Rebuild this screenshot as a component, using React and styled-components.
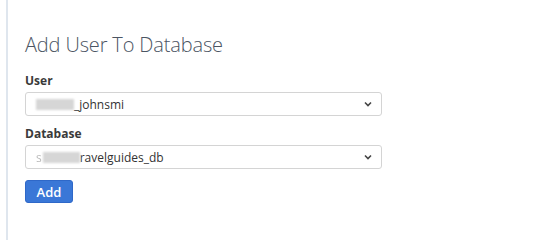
import React from 'react';
import styled, { createGlobalStyle } from 'styled-components';

const GlobalStyle = createGlobalStyle`
body {
  margin: 0;
  background: #ffffff;
  font-family: "Open Sans", "Liberation Sans", Arial, sans-serif;
}
`;

const Page = styled.div`
width: 550px;
height: 240px;
padding-left: 6px;
box-sizing: border-box;
overflow: hidden;
`;

// panel with the faint rule down its left edge
const Panel = styled.section`
height: 100%;
border-left: 2px solid #dfe6ee;
padding: 33px 0 0 17px;
box-sizing: border-box;
display: flex;
flex-direction: column;
`;

const Heading = styled.h2`
margin: 0 0 16px;
font-size: 20px;
line-height: 24px;
font-weight: 300;
color: #4b5563;
letter-spacing: -0.15px;
`;

const Field = styled.div`
display: flex;
flex-direction: column;
margin-bottom: ${({ last }) => (last ? '11px' : '10px')};
`;

const Label = styled.label`
font-size: 12px;
line-height: 16px;
font-weight: 700;
color: #3a3a3a;
margin-bottom: 3px;
`;

const SelectBox = styled.div`
width: 357px;
height: 24px;
box-sizing: border-box;
border: 1px solid #d4d4d4;
border-radius: 3px;
background: #fff;
display: flex;
align-items: center;
padding: 0 9px 0 10px;
font-size: 12px;
color: #333;
`;

const Value = styled.span`
flex: 1;
display: flex;
align-items: center;
white-space: nowrap;
`;

const Blur = styled.span`
display: inline-block;
width: ${({ w }) => w}px;
height: 11px;
background: #d6d6d6;
filter: blur(1px);
margin-left: ${({ ml }) => ml || 0}px;
`;

const Letter = styled.span`
color: #bbb;
filter: blur(0.6px);
`;

const Chevron = () => (
  <svg width="8" height="6" viewBox="0 0 8 6">
    <path d="M1 1.5 L4 4.5 L7 1.5" fill="none" stroke="#444" strokeWidth="1.6" />
  </svg>
);

const Button = styled.button`
align-self: flex-start;
width: 48px;
height: 23px;
border: 1px solid #2f68c8;
border-radius: 3px;
background: #3a77d7;
color: #fff;
font-family: inherit;
font-size: 13px;
font-weight: 600;
padding: 0;
cursor: pointer;
`;

const App = () => (
  <Page>
    <GlobalStyle />
    <Panel>
      <Heading>Add User To Database</Heading>
      <Field>
        <Label>User</Label>
        <SelectBox>
          <Value>
            <Blur w={38} />
            _johnsmi
          </Value>
          <Chevron />
        </SelectBox>
      </Field>
      <Field last>
        <Label>Database</Label>
        <SelectBox>
          <Value>
            <Letter>s</Letter>
            <Blur w={37} ml={1} />
            ravelguides_db
          </Value>
          <Chevron />
        </SelectBox>
      </Field>
      <Button>Add</Button>
    </Panel>
  </Page>
);

export default App;
